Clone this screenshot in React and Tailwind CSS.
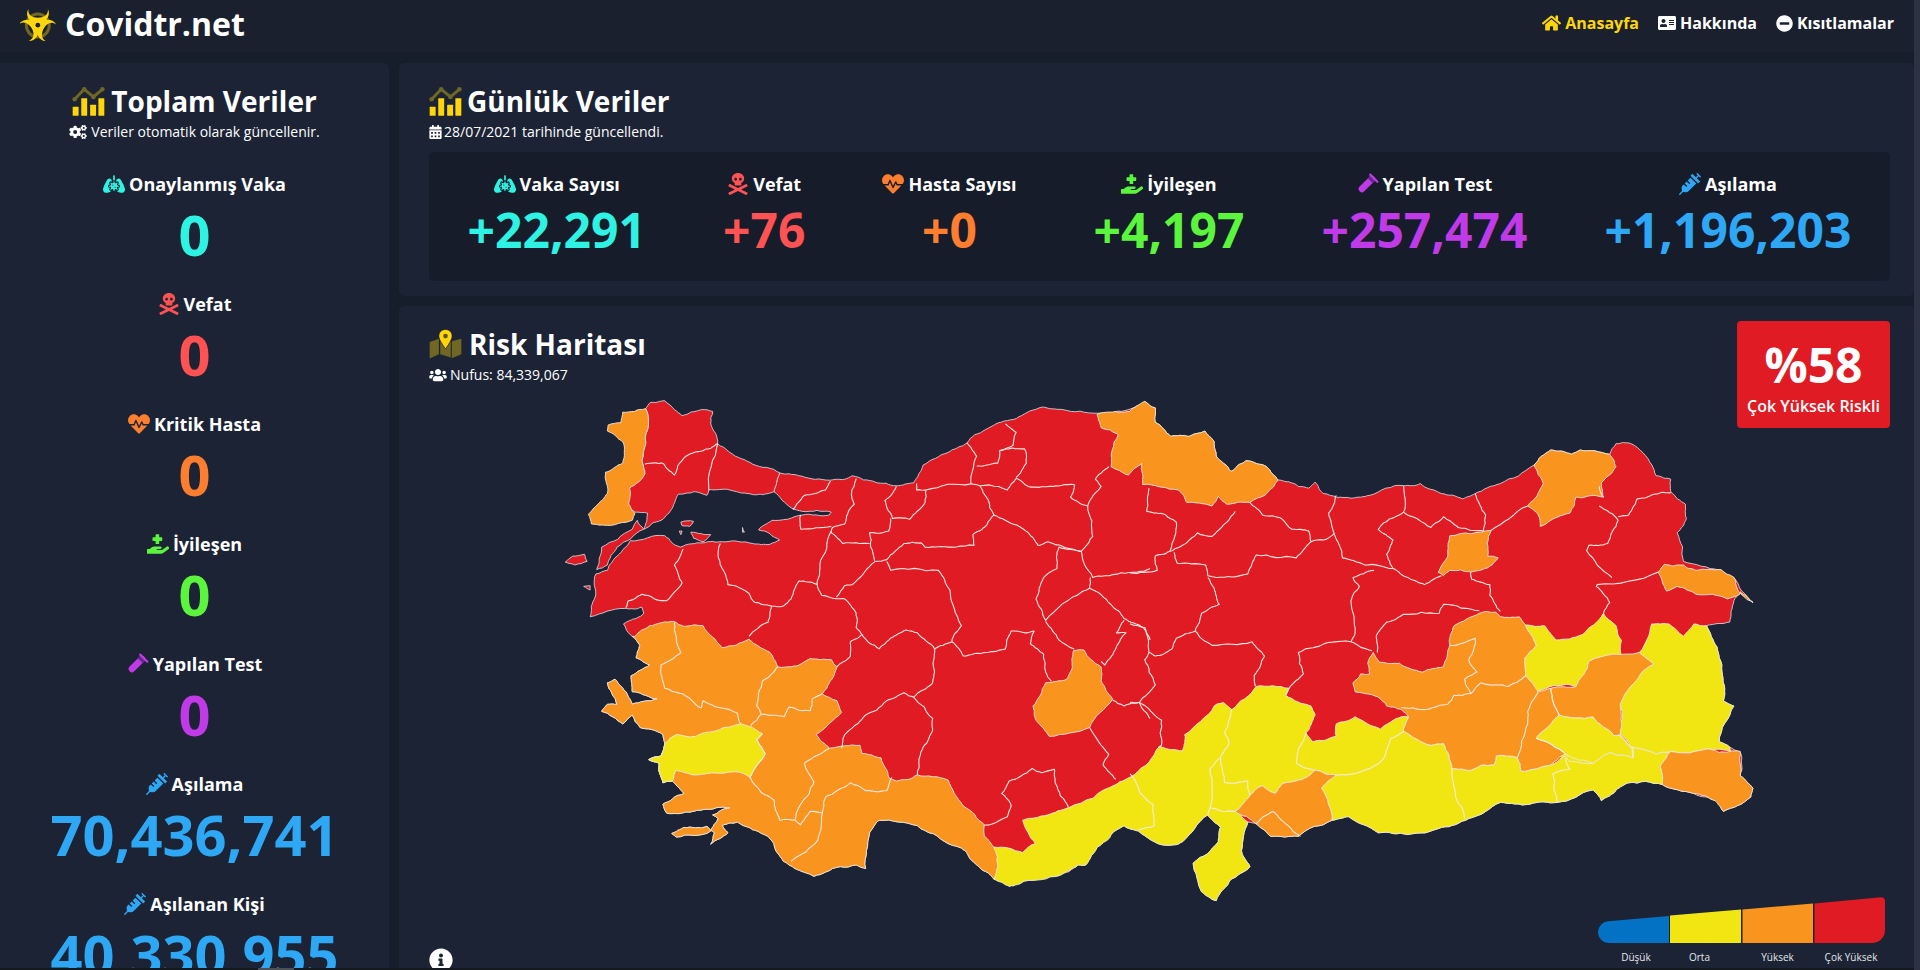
import React from "react";
import { FaLungsVirus, FaSkullCrossbones, FaHeartbeat, FaHandHoldingMedical, FaSyringe, FaCogs, FaCalendarAlt, FaUsers, FaHome, FaAddressCard, FaMinusCircle, FaInfoCircle } from "react-icons/fa";

const rr = (s) => s.trim().split(/\s+/).map((p) => { const [x, y] = p.split(",").map(Number); return `${(x * 1.0997 + 1515.5).toFixed(1)},${y}`; }).join(" ");

const hash = (a, b) => { const s = Math.sin(a * 12.9898 + b * 78.233) * 43758.5453; return s - Math.floor(s) - 0.5; };
function split(p, q, d) {
  const dx = q[0] - p[0], dy = q[1] - p[1];
  const len = Math.hypot(dx, dy);
  if (d === 0 || len < 9) return [];
  const flip = p[0] > q[0] || (p[0] === q[0] && p[1] > q[1]);
  const nx = (flip ? dy : -dy) / len, ny = (flip ? -dx : dx) / len;
  const mx = (p[0] + q[0]) / 2, my = (p[1] + q[1]) / 2;
  const k = hash(mx, my) * len * 0.16;
  const m = [mx + nx * k, my + ny * k];
  return [...split(p, m, d - 1), m, ...split(m, q, d - 1)];
}
function rough(str, closed) {
  const pts = str.trim().split(/\s+/).map((p) => p.split(",").map(Number));
  const out = [];
  const n = pts.length;
  for (let i = 0; i < n; i++) {
    out.push(pts[i]);
    if (i < n - 1 || closed) out.push(...split(pts[i], pts[(i + 1) % n], 3));
  }
  return out.map((p) => `${p[0].toFixed(1)},${p[1].toFixed(1)}`).join(" ");
}

const northEast = "-20,60 35,32 60,50 60,90 97,130 140,130 178,115 200,145 205,185 240,228 275,198 325,215 352,252 400,270 425,275 440,258 460,290 525,303 570,295 650,268 690,262 740,290 790,305 820,290 880,262 960,210 1000,168 1050,180 1070,168 1140,180 1155,150 1190,150 1240,210 1250,240 1285,250 1285,285 1320,320 1322,360 1300,400 1315,480 1400,505 1435,525 1480,595 1450,570 1435,590 1425,650 1370,660 1395,720 1408,800 1410,870 1435,885 1400,985 1425,1000 1450,1015 1450,1080 1480,1115 1475,1140 1410,1180 1395,1150 1340,1130 1265,1105 1185,1100 1155,1120 1120,1150 1100,1120 1015,1155 950,1160 880,1155 805,1200 740,1225 660,1245 590,1240 520,1195 480,1205 400,1250 335,1250 300,1215 280,1210 265,1290 285,1335 240,1370 205,1430 170,1405 150,1325 210,1265 215,1225 185,1190 125,1265 85,1275 20,1235 -14,1220";
const southMid = "1470,1240 1430,1280 1400,1330 1380,1330 1330,1360 1240,1375 1200,1390 1160,1370";
const coastSW = "1115,1330 1085,1290 1040,1270 960,1220 860,1205 835,1240 825,1340 800,1330 720,1350 690,1362 640,1340 610,1320 585,1270 560,1245 520,1225 490,1210 450,1220 465,1240 420,1272 430,1240 410,1222 350,1225 318,1242 330,1252 420,1235 440,1200 425,1190 470,1170 400,1175 355,1182 305,1185 295,1160 320,1145 350,1130 320,1095 295,1100 285,1045 258,1035 290,1025 300,990 295,965 235,945 215,910 190,935 135,900 150,880 175,880 150,820 170,810 205,860 215,880 280,865 250,855 215,845 212,800 260,770 225,750 235,715 215,690";
const asia = `600,232 650,240 720,252 770,250 790,240 850,258 905,268 950,260 970,225 975,210 1040,175 1090,148 1110,125 1165,95 1225,75 1285,48 1340,55 1430,65 1480,60 ${rr(northEast)} ${southMid} ${coastSW} 205,680 192,655 225,640 245,625 240,608 195,612 105,635 118,580 120,515 150,505 170,470 210,422 300,408 340,440 400,428 450,425 530,430 575,432 600,420 545,392 580,365 660,350 730,350 735,342 660,340 630,330 585,285`;

const redShapes = [
  asia,
  "250,52 262,35 300,30 325,55 345,72 395,55 425,60 420,95 438,150 470,175 530,208 600,232 585,285 555,293 515,290 470,280 415,280 410,295 375,285 335,292 320,330 290,365 245,390 255,345 222,342 198,330 198,275 248,235 240,200 250,145",
  "228,365 245,390 175,440 150,490 122,503 135,440 215,390",
  "40,482 60,465 90,460 97,480 65,490",
  "88,550 105,548 105,560",
  "342,370 375,368 365,382 345,380",
  "368,398 420,405 400,425 375,415",
  "503,385 508,398 503,398",
  "338,395 345,395 342,405",
];

const orangeL = [
  "190,62 250,52 250,145 240,200 248,235 208,275 206,320 222,345 215,365 165,378 108,375 100,348 125,320 150,290 145,230 190,205 190,145 150,115 152,98 185,92",
  `222,690 260,660 325,648 350,662 400,660 450,722 520,698 575,735 595,775 630,775 680,752 735,755 750,775 730,820 712,850 750,870 762,903 695,965 730,1003 810,995 815,1018 865,1030 885,1085 905,1095 960,1078 1040,1092 1080,1165 1135,1218 1135,1250 1160,1280 1170,1335 1160,1370 ${coastSW}`,
  "1368,730 1395,728 1440,775 1440,815 1470,865 1410,945 1305,970 1270,925 1262,885 1295,820 1350,810 1365,775",
];
const yellowL = ["300,990 330,965 380,970 480,940 500,935 555,962 540,980 562,1018 522,1085 495,1070 380,1078 330,1065 320,1095 295,1100 285,1045 258,1035 290,1025"];

const yellowPatch = "1025,1010 1120,1025 1120,1065 1015,1070";
const yellowR = [
  "-323,1280 -255,1295 -225,1270 -255,1205 -196,1190 -146,1170 -34,1105 9,1078 70,998 125,1010 130,965 200,885 222,875 242,895 300,830 378,835 370,855 430,885 440,910 418,960 435,985 490,970 490,935 535,915 595,950 645,915 662,915 650,955 715,995 745,990 765,1060 810,1065 835,1050 865,1050 870,1025 920,1030 930,1068 1000,1050 1035,1025 1045,1040 1100,1045 1140,1015 1195,1030 1190,1000 1250,1020 1285,1012 1260,1055 1265,1105 1185,1100 1155,1120 1120,1150 1100,1120 1015,1155 950,1160 880,1155 805,1200 740,1225 660,1245 590,1240 520,1195 480,1205 455,1115 490,1078 440,1065 410,1090 360,1105 345,1130 315,1108 285,1135 250,1180 280,1210 265,1290 285,1335 240,1370 205,1430 170,1405 150,1325 210,1265 215,1225 185,1190 125,1265 85,1275 20,1235 -14,1220 -41,1240 -78,1280 -105,1330 -123,1330 -169,1360 -250,1375 -287,1390 -323,1370",
  "1240,655 1280,655 1315,690 1340,655 1370,660 1395,720 1408,800 1410,870 1435,885 1400,985 1425,1000 1428,1012 1375,1005 1285,1012 1250,1020 1190,1000 1165,960 1165,880 1190,830 1245,768 1210,735",
  "940,658 985,660 1012,700 1075,685 1125,625 1155,660 1168,700 1168,750 1095,760 1060,830 1000,830 965,845 940,800 938,750 965,715",
  "1020,910 1100,915 1150,968 1165,965 1190,1000 1195,1030 1140,1015 1100,1045 1035,1020 965,975",
];
const orangeR = [
  "-78,68 -69,105 -28,125 -45,215 -4,238 28,205 30,265 115,280 135,315 195,325 210,298 230,320 285,315 325,290 352,252 325,215 275,198 240,228 205,185 200,145 178,115 140,130 97,130 60,90 60,50 35,32 0,60 -20,62",
  "960,210 1000,168 1050,180 1070,168 1140,180 1155,215 1120,260 1125,300 1100,295 1060,300 1045,345 1000,365 975,382 970,350 945,325 982,262",
  "760,408 858,393 850,465 875,470 860,490 810,510 760,505 745,520 732,510 755,465",
  "1255,510 1270,488 1315,490 1345,505 1405,503 1435,525 1450,570 1420,585 1345,572 1300,550 1275,563",
  "1450,565 1480,595 1455,575",
  "578,735 592,762 640,765 695,790 745,775 760,715 770,660 830,625 868,622 880,635 925,635 940,658 965,715 938,750 940,800 970,845 1000,835 1035,870 1020,910 965,975 1035,1020 1000,1050 930,1068 920,1030 870,1025 865,1050 835,1050 810,1065 765,1060 745,990 715,995 650,955 662,915 645,895 610,885 595,865 535,845 530,820 548,795 570,795 565,765",
  "1000,835 1060,830 1090,760 1210,735 1245,768 1190,830 1165,880 1165,965 1150,968 1100,915 1020,910",
  "1285,1012 1375,1005 1400,1015 1450,1012 1450,1080 1480,1115 1475,1140 1410,1180 1390,1150 1340,1130 1265,1105 1260,1055",
  "440,1065 490,1078 455,1115 480,1205 400,1250 335,1250 300,1215 250,1180 285,1135 315,1108 345,1130 360,1105 410,1090",
];

const linesL = [
  "325,650 342,735 290,770 300,835 345,850 395,890 400,870 490,905 498,935",
  "595,775 555,815 540,885 552,908 525,940",
  "552,908 612,915 625,888 680,898 685,865 712,850",
  "555,962 540,980 562,1018 522,1085 550,1125 585,1148 600,1205 640,1205",
  "730,1003 665,1045 690,1098 655,1160 640,1205 655,1218 680,1180 712,1185 700,1260 630,1320",
  "712,1185 720,1140 785,1100 825,1122 880,1122 893,1085",
  "438,150 415,280", "248,208 295,205 325,238 350,190 400,170 438,150",
  "733,255 720,280 665,295 635,335",
  "800,248 788,285 795,320 770,375 738,385 735,400",
  "655,350 655,390", "655,390 735,382",
  "905,270 875,310 890,345 895,360 940,362 980,315 982,280 1100,263",
  "958,262 958,280 982,280", "1090,148 1115,185 1100,263",
  "1115,213 1170,205 1175,170 1240,165 1245,205 1218,245",
  "1190,95 1218,118 1210,155 1175,170",
  "1100,263 1195,280 1218,248 1250,270 1305,270 1370,265 1360,300 1405,325 1418,410 1388,452",
  "1123,268 1160,350 1140,380 1105,405 1108,435 1050,440 980,440 970,428 925,430 880,475 850,480",
  "1160,350 1220,378 1250,400 1275,435 1300,425 1340,438 1388,452 1418,525 1450,520 1535,510 1568,500",
  "1405,325 1440,270 1425,250 1460,215",
  "890,360 885,395 835,400 848,478", "735,400 765,430 835,430",
  "735,395 705,490 698,545 650,535 630,585 610,605 580,605 535,595 520,570 465,545 440,470 445,430",
  "348,445 325,490 345,540 305,590 240,572 205,590 198,610",
  "580,605 570,650 520,690",
  "698,545 710,575 770,585 800,625 800,665 815,685 785,705 785,745 750,775",
  "748,580 770,548 790,545 850,480",
  "880,480 890,505 1015,505 1045,560 1075,660 1050,705 1005,725 960,680 930,672 890,695 860,725 815,685",
  "1050,705 1080,745 1140,735 1190,725 1205,675 1240,680 1265,675 1255,710 1290,740 1295,790 1310,815",
  "1005,725 1005,790 1000,820 950,860 925,848 880,870 820,915 770,965 762,1003",
  "950,860 1000,920 1000,950 975,1000 965,1030 960,1078",
  "1135,1218 1195,1195 1205,1165 1180,1130 1200,1095 1260,1060 1285,1072 1318,1062 1320,1100 1355,1170",
  "1388,452 1330,440 1325,500 1290,525 1270,585 1295,645 1390,565 1410,555 1412,525",
  "1295,648 1330,700 1370,725", "1410,555 1465,600 1500,640 1550,665 1568,700",
  "1500,645 1480,680 1505,680 1480,720 1450,770 1440,760",
  "1410,945 1460,1020 1445,1050 1478,1090", "1470,868 1500,885 1540,875 1568,920",
];
const linesR = [
  "285,315 315,350 360,360 385,390 425,395 430,425 395,470 300,462 280,515 205,525 185,520 180,490 112,485 105,455",
  "430,425 460,420 485,402 472,345 490,295", "485,402 505,470 558,490 625,500 660,525 700,545 740,520",
  "650,268 650,342 590,390 625,420 610,460 625,500", "650,342 715,385 745,355 780,385 840,395",
  "820,290 845,350 840,395", "858,393 945,325",
  "250,340 225,375 195,410 160,400 100,450 60,465 65,505 0,512", "45,275 40,340 85,350 110,370 95,450",
  "185,525 200,555 212,600 170,625 155,675 110,695 100,725 60,745 45,735 35,665 0,655",
  "155,675 195,715 290,705 320,745 295,800 298,830", "0,875 22,875 75,925 75,995 68,1000", "22,875 60,825 35,755 45,735",
  "580,505 530,525 545,550 525,590 535,680 525,705 440,720 400,735 412,795 370,855", "525,705 575,730",
  "585,690 610,650 650,628 735,625 745,600 830,618", "585,690 588,735", "810,510 812,530 855,545 855,575 880,620",
  "1125,625 1140,595 1108,550 1110,545 1255,510", "1145,525 1085,450 1090,435 1135,430 1160,365 1115,325",
  "1160,355 1185,350 1205,305 1285,288", "1115,270 1125,300",
  "760,715 820,695 805,755 825,790 795,810 810,850 770,855 755,880 700,895 645,890",
  "810,850 835,820 900,830 940,800", "970,845 945,900 945,935 920,1030",
  "795,1200 765,1080 765,1060", "1015,1155 1005,1075 1045,1062 1035,1030",
  "490,1078 545,1070 600,1035 620,975 650,955", "395,1045 410,985 418,960", "395,1045 440,1065",
  "285,1135 280,1095 225,1100 215,1030 190,1060 190,1170 185,1190", "215,1030 235,990 225,960 242,895", "190,1170 250,1180",
  "300,1215 340,1180 380,1225 405,1250", "0,1075 25,1130 55,1160 58,1220 20,1230", "1195,1000 1195,1030",
  "965,975 1035,1020", "1000,835 1020,910", "1165,965 1190,1000",
];

const RED = "#e01b24", ORANGE = "#f9941f", YELLOW = "#f2e612";

function Area({ points, fill, stroke = "#ece9e4" }) {
  return <polygon points={rough(points, true)} fill={fill} stroke={stroke} strokeWidth="0.9" vectorEffect="non-scaling-stroke" strokeLinejoin="round" />;
}

function TurkeyMap() {
  return (
    <svg viewBox="429 395 1461 570" width="1461" height="570" className="block">
      <g transform="translate(550 390) scale(0.3827 0.3571)">
        {redShapes.map((p, i) => <Area key={i} points={p} fill={RED} stroke="#cfd3da" />)}
        <Area points={rr(yellowPatch)} fill={YELLOW} stroke={YELLOW} />
        {yellowR.map((p, i) => <Area key={i} points={rr(p)} fill={YELLOW} />)}
        {orangeR.map((p, i) => <Area key={i} points={rr(p)} fill={ORANGE} />)}
        {orangeL.map((p, i) => <Area key={i} points={p} fill={ORANGE} />)}
        {yellowL.map((p, i) => <Area key={i} points={p} fill={YELLOW} />)}
        {linesL.map((p, i) => <polyline key={i} points={rough(p)} fill="none" stroke="#f6e9e4" strokeWidth="1.1" vectorEffect="non-scaling-stroke" strokeLinejoin="round" />)}
        {linesR.map((p, i) => <polyline key={i} points={rough(rr(p))} fill="none" stroke="#f6e9e4" strokeWidth="1.1" vectorEffect="non-scaling-stroke" strokeLinejoin="round" />)}
      </g>
      <path d="M1669 916V943H1609a11 11 0 0 1 -11 -11a11 11 0 0 1 10 -10.800z" fill="#0472c4" />
      <path d="M1670 915.500L1741 909.500V943H1670z" fill={YELLOW} />
      <path d="M1742.500 909.500L1813 903.500V943H1742.500z" fill={ORANGE} />
      <path d="M1814.500 903.500L1881 897.300a4 4 0 0 1 4 4V930a13 13 0 0 1 -13 13H1814.500z" fill={RED} />
      <g fill="#e5e7eb" fontSize="10" textAnchor="middle" fontFamily="'Open Sans',sans-serif">
        <text x="1636" y="961">Düşük</text>
        <text x="1699.500" y="961">Orta</text>
        <text x="1777.500" y="961">Yüksek</text>
        <text x="1851" y="961">Çok Yüksek</text>
      </g>
    </svg>
  );
}

function Chart() {
  return (
    <svg viewBox="170 258 100 88" className="w-[33px] h-[29px] shrink-0">
      <path d="M178 295L207 265L235 288L262 265" fill="none" stroke="#6f6722" strokeWidth="9" />
      <circle cx="178" cy="295" r="7" fill="#6f6722" /><circle cx="207" cy="265" r="7" fill="#6f6722" />
      <circle cx="235" cy="288" r="7" fill="#6f6722" /><circle cx="262" cy="265" r="7" fill="#6f6722" />
      <rect x="172" y="318" width="18" height="27" rx="1" fill="#ffd60a" />
      <rect x="198" y="292" width="18" height="53" rx="1" fill="#ffd60a" />
      <rect x="225" y="312" width="18" height="33" rx="1" fill="#ffd60a" />
      <rect x="250" y="292" width="18" height="53" rx="1" fill="#ffd60a" />
    </svg>
  );
}

function Biohazard() {
  const horn = "M40 25C29 44 43 62 55 68L68 60L81 68C93 62 107 44 98 25C100 43 85 51 68 51C51 51 38 43 40 25z";
  return (
    <svg viewBox="15 22 110 98" className="w-[37px] h-[33px] shrink-0">
      <circle cx="68" cy="74" r="34" fill="none" stroke="#6f6722" strokeWidth="9" />
      <path d={horn} fill="#ffd60a" />
      <path d={horn} fill="#ffd60a" transform="rotate(120 68 72)" />
      <path d={horn} fill="#ffd60a" transform="rotate(240 68 72)" />
      <circle cx="68" cy="73" r="15" fill="#ffd60a" />
      <circle cx="68" cy="73" r="7" fill="#1a202e" />
    </svg>
  );
}

function MapMarked() {
  return (
    <svg viewBox="10 26 100 90" className="w-[33px] h-[30px] shrink-0">
      <path d="M12 65L40 55V102L12 115zM44 58L76 64V112L44 102zM79 63L108 55V102L79 114z" fill="#6f6722" />
      <path d="M60 27C48 27 40 36 40 47C40 58 52 74 60 86C68 74 80 58 80 47C80 36 72 27 60 27z" fill="#ffd60a" stroke="#1a202e" strokeWidth="2" />
      <circle cx="60" cy="47" r="7" fill="#5b5520" />
    </svg>
  );
}

function VialIcon({ className }) {
  return (
    <svg viewBox="0 0 20 20" className={className}>
      <path d="M13.500 5.500L4.500 14.500" stroke="currentColor" strokeWidth="6" strokeLinecap="round" fill="none" />
      <path d="M15 4L12 7" stroke="#5f2a86" strokeWidth="6" fill="none" />
      <path d="M12 1.500L18.500 8" stroke="currentColor" strokeWidth="2" strokeLinecap="round" fill="none" />
    </svg>
  );
}

const C = { cyan: "text-[#2ef2e2]", red: "text-[#ff5252]", orange: "text-[#fd7e2f]", green: "text-[#5cf53d]", purple: "text-[#c03ae8]", blue: "text-[#2ea8f5]" };

function Label({ Icon, color, children }) {
  return (
    <div className="flex items-center justify-center gap-[4px] text-[18px] leading-[26px] font-bold text-white whitespace-nowrap">
      <Icon className={`w-[22px] h-[22px] ${color}`} />
      <span>{children}</span>
    </div>
  );
}

function Total({ Icon, color, label, value }) {
  return (
    <div className="h-[120px] text-center">
      <Label Icon={Icon} color={color}>{label}</Label>
      <div className={`text-[56px] leading-[74px] font-bold ${color}`}>{value}</div>
    </div>
  );
}

function Daily({ Icon, color, label, value }) {
  return (
    <div className="text-center">
      <Label Icon={Icon} color={color}>{label}</Label>
      <div className={`text-[48px] leading-[66px] font-bold ${color}`}>{value}</div>
    </div>
  );
}

function Nav({ Icon, active, size, children }) {
  return (
    <a className={`flex items-center gap-[4px] text-[16px] font-bold ${active ? "text-[#ffd60a]" : "text-white"}`}>
      <Icon className={size} />
      {children}
    </a>
  );
}

export default function App() {
  return (
    <div className="relative h-[970px] w-[1920px] overflow-hidden bg-[#171e2b] text-white pr-[6px] [font-family:'Open_Sans',sans-serif]">
      <header className="h-[52px] bg-[#1a202e] flex items-center justify-between pl-[20px] pr-[20px] pb-[4px]">
        <div className="flex items-center gap-[8px]">
          <Biohazard />
          <span className="text-[32px] leading-[44px] font-bold">Covidtr.net</span>
        </div>
        <nav className="flex items-center gap-[19px] mb-[2px]">
          <Nav Icon={FaHome} size="w-[19px] h-[18px]" active>Anasayfa</Nav>
          <Nav Icon={FaAddressCard} size="w-[18px] h-[18px]">Hakkında</Nav>
          <Nav Icon={FaMinusCircle} size="w-[17px] h-[17px]">Kısıtlamalar</Nav>
        </nav>
      </header>

      <main className="flex gap-[10px] mt-[11px]">
        <aside className="w-[389px] h-[907px] bg-[#1b2335] rounded-tr-[5px] overflow-hidden shrink-0 pt-[18px]">
          <div className="flex items-center justify-center gap-[6px] h-[40px] text-[28px] font-bold">
            <Chart />
            <span>Toplam Veriler</span>
          </div>
          <div className="flex items-center justify-center gap-[4px] text-[14px] leading-[20px] mt-[1px]">
            <FaCogs className="w-[18px] h-[14px]" />
            Veriler otomatik olarak güncellenir.
          </div>
          <div className="mt-[29px]">
            <Total Icon={FaLungsVirus} color={C.cyan} label="Onaylanmış Vaka" value="0" />
            <Total Icon={FaSkullCrossbones} color={C.red} label="Vefat" value="0" />
            <Total Icon={FaHeartbeat} color={C.orange} label="Kritik Hasta" value="0" />
            <Total Icon={FaHandHoldingMedical} color={C.green} label="İyileşen" value="0" />
            <Total Icon={VialIcon} color={C.purple} label="Yapılan Test" value="0" />
            <Total Icon={FaSyringe} color={C.blue} label="Aşılama" value="70,436,741" />
            <Total Icon={FaSyringe} color={C.blue} label="Aşılanan Kişi" value="40,330,955" />
          </div>
        </aside>

        <div className="flex-1 min-w-0 flex flex-col gap-[10px]">
          <section className="h-[233px] bg-[#1b2335] rounded-[5px] pt-[18px] pl-[30px] pr-[24px]">
            <div className="flex items-center gap-[5px] h-[40px] text-[28px] font-bold">
              <Chart />
              <span>Günlük Veriler</span>
            </div>
            <div className="flex items-center gap-[2px] text-[14px] leading-[20px] mt-[1px]">
              <FaCalendarAlt className="w-[13px] h-[14px]" />
              28/07/2021 tarihinde güncellendi.
            </div>
            <div className="mt-[10px] h-[129px] bg-[#161c2a] rounded-[5px] flex justify-around pt-[19px]">
              <Daily Icon={FaLungsVirus} color={C.cyan} label="Vaka Sayısı" value="+22,291" />
              <Daily Icon={FaSkullCrossbones} color={C.red} label="Vefat" value="+76" />
              <Daily Icon={FaHeartbeat} color={C.orange} label="Hasta Sayısı" value="+0" />
              <Daily Icon={FaHandHoldingMedical} color={C.green} label="İyileşen" value="+4,197" />
              <Daily Icon={VialIcon} color={C.purple} label="Yapılan Test" value="+257,474" />
              <Daily Icon={FaSyringe} color={C.blue} label="Aşılama" value="+1,196,203" />
            </div>
          </section>

          <section className="h-[700px] bg-[#1b2335] rounded-[5px] pt-[15px] pl-[30px] pr-[24px]">
            <div className="flex justify-between h-[74px]">
              <div className="pt-[3px]">
                <div className="flex items-center gap-[7px] h-[40px] text-[28px] font-bold">
                  <MapMarked />
                  <span>Risk Haritası</span>
                </div>
                <div className="flex items-center gap-[3px] text-[14px] leading-[20px] mt-[1px]">
                  <FaUsers className="w-[18px] h-[14px]" />
                  Nufus: 84,339,067
                </div>
              </div>
              <div className="relative z-10 w-[153px] h-[107px] bg-[#e01b24] rounded-[4px] text-center pt-[14px] shrink-0">
                <div className="text-[48px] leading-[60px] font-bold">%58</div>
                <div className="text-[16px] leading-[22px] font-semibold">Çok Yüksek Riskli</div>
              </div>
            </div>
            <TurkeyMap />
            <FaInfoCircle className="w-[24px] h-[24px] text-white -mt-[17px]" />
          </section>
        </div>
      </main>

      <div className="absolute top-0 right-0 bottom-0 w-[6px] bg-[#2c3242]" />
      <div className="absolute left-0 right-[6px] bottom-0 h-[2px] bg-[#14181f]">
        <div className="ml-[258px] w-[36px] h-[2px] bg-[#4a4f58]" />
      </div>
    </div>
  );
}
